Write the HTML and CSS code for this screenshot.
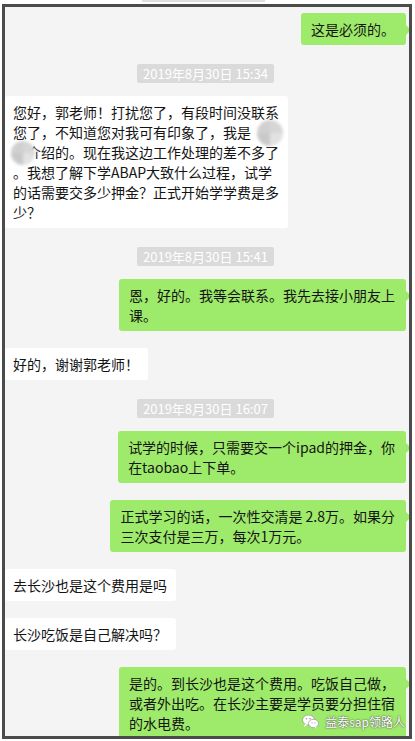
FILE: index.html
```
<!DOCTYPE html>
<html lang="zh-CN">
<head>
  <meta charset="UTF-8">
  <title>聊天记录</title>
  <link rel="stylesheet" href="styles.css">
</head>
<body>
  <div class="topbar"></div>
  <div class="frame">
    <div class="chat">
      <div class="bubble me first">这是必须的。</div>

      <div class="time">2019年8月30日 15:34</div>
      <div class="bubble">您好，郭老师！打扰您了，有段时间没联系<br>您了，不知道您对我可有印象了，我是　<br>　介绍的。现在我这边工作处理的差不多了<br>。我想了解下学ABAP大致什么过程，试学<br>的话需要交多少押金？正式开始学学费是多<br>少？<span class="blur blur-a"></span><span class="blur blur-b"></span></div>

      <div class="time">2019年8月30日 15:41</div>
      <div class="bubble me">恩，好的。我等会联系。我先去接小朋友上<br>课。</div>
      <div class="bubble">好的，谢谢郭老师！</div>

      <div class="time">2019年8月30日 16:07</div>
      <div class="bubble me">试学的时候，只需要交一个ipad的押金，你<br>在taobao上下单。</div>
      <div class="bubble me">正式学习的话，一次性交清是 2.8万。如果分<br>三次支付是三万，每次1万元。</div>
      <div class="bubble">去长沙也是这个费用是吗</div>
      <div class="bubble">长沙吃饭是自己解决吗？</div>
      <div class="bubble me">是的。到长沙也是这个费用。吃饭自己做，<br>或者外出吃。在长沙主要是学员要分担住宿<br>的水电费。</div>
    </div>

    <!-- watermark -->
    <div class="mark">
      <svg width="17" height="15" viewBox="0 0 17 15">
        <ellipse cx="6.5" cy="6" rx="6" ry="5" fill="#fff" stroke="#9a9a9a" stroke-width="0.8"/>
        <path d="M3 10 L2 13 L5.5 10.8 Z" fill="#fff"/>
        <ellipse cx="11.5" cy="9.5" rx="5" ry="4.2" fill="#fff" stroke="#9a9a9a" stroke-width="0.8"/>
        <path d="M14 13 L15 14.6 L12.5 13.5 Z" fill="#fff"/>
        <circle cx="4.6" cy="4.8" r="0.8" fill="#9a9a9a"/>
        <circle cx="8" cy="4.8" r="0.8" fill="#9a9a9a"/>
        <circle cx="10" cy="8.8" r="0.6" fill="#9a9a9a"/>
        <circle cx="13" cy="8.8" r="0.6" fill="#9a9a9a"/>
      </svg>
      <span>益泰sap领路人</span>
    </div>
  </div>
</body>
</html>
```

FILE: styles.css
```
body {
  margin: 0;
  background: #fff;
  font-family: "Noto Sans CJK SC", "Noto Sans", sans-serif;
}

.topbar {
  width: 123px;
  height: 2px;
  margin-left: 142px;
  background: #dedede;
}

.frame {
  position: relative;
  box-sizing: border-box;
  width: 410px;
  height: 735px;
  margin: 2px 0 0 2px;
  border: 3px solid #4b4b4b;
  background: #f4f4f4;
  overflow: hidden;
}

.chat {
  display: flex;
  flex-direction: column;
  align-items: flex-start;
  padding-top: 6px;
}

.bubble {
  position: relative;
  margin-top: 17px;
  padding: 6px 9px 6px 8px;
  font-size: 14px;
  line-height: 20px;
  color: #141414;
  background: #fff;
  border-radius: 3px;
  white-space: nowrap;
}

.bubble.me {
  align-self: flex-end;
  margin-right: 3px;
  padding: 6px 11px 6px 10px;
  background: #9eea6a;
}

.bubble.me::after {
  content: "";
  position: absolute;
  right: -5px;
  top: 12px;
  border-left: 5px solid #9eea6a;
  border-top: 5px solid transparent;
  border-bottom: 5px solid transparent;
}

.bubble.first,
.time + .bubble {
  margin-top: 0;
}

.time {
  margin: 19px 0 13px 132px;
  padding: 0 6px;
  height: 19px;
  line-height: 19px;
  font-size: 13px;
  color: #fff;
  background: #dadada;
  border-radius: 2px;
}

/* mosaic blur over names */
.blur {
  position: absolute;
  border-radius: 50%;
  background: conic-gradient(#d6d6d6 0 25%, #e2e2e2 0 50%, #c9c9c9 0 75%, #d0d0d0 0);
  filter: blur(1.5px);
}

.blur-a {
  left: 252px;
  top: 24px;
  width: 26px;
  height: 26px;
}

.blur-b {
  left: 6px;
  top: 45px;
  width: 24px;
  height: 24px;
}

.mark {
  position: absolute;
  right: 4px;
  bottom: 6px;
  display: flex;
  align-items: center;
  gap: 6px;
  font-size: 12px;
  color: #fff;
  text-shadow: 0 0 2px #555, 0 0 1px #555;
}
```
